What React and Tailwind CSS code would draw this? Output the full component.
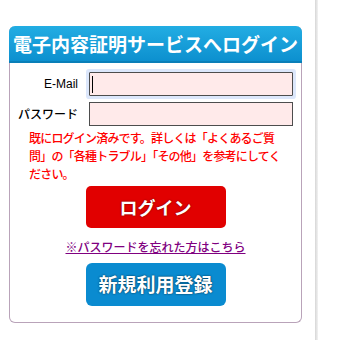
import React from 'react';

const jp = "font-['Noto_Sans_CJK_JP',sans-serif]";

function Field({ label, latin, focused }) {
  return (
    <div className="flex items-center">
      <div
        className={`w-[69px] pr-[1px] text-right text-[12px] text-black ${
          latin ? "font-['Liberation_Sans',sans-serif]" : `${jp} font-medium`
        }`}
      >
        {label}
      </div>
      <div
        className={`ml-[10px] flex h-[24px] w-[204px] items-center border border-[#4d4d4d] bg-[#ffeaea] ${
          focused ? 'rounded-[1px] ring-[3px] ring-[#dce7fb]' : ''
        }`}
      >
        {focused ? <span className="ml-[2px] h-[17px] w-px bg-black" /> : null}
      </div>
    </div>
  );
}

export default function App() {
  return (
    <div className={`flex h-[340px] bg-white ${jp}`}>
      <div className="w-[315px] pl-[9px] pt-[26px]">
        <div className="flex h-[297px] w-[293px] flex-col items-stretch rounded-[6px] border border-t-0 border-[#b9a3b9]">
          <div className="-mx-px flex h-[37px] items-center justify-center rounded-t-[6px] border-b-2 border-[#0a7fb8] bg-gradient-to-b from-[#22ade3] to-[#0c90cf] text-[19px] font-bold leading-none text-white">
            電子内容証明サービスへログイン
          </div>

          <div className="flex flex-col gap-[6px] pt-[9px]">
            <Field label="E-Mail" latin focused />
            <Field label="パスワード" />
          </div>

          <p className="mt-[3px] w-[272px] pl-[19px] text-[12px] font-medium leading-[18px] tracking-[-0.8px] text-[#ff0000]">
            既にログイン済みです。詳しくは「よくあるご質問」の「各種トラブル」「その他」を参考にしてください。
          </p>

          <button className="mx-auto mt-[3px] flex h-[42px] w-[140px] items-center justify-center rounded-[5px] bg-[#e10000] text-[18px] font-bold text-white [text-shadow:0_0_2px_#600]">
            ログイン
          </button>

          <a
            href="#"
            className="mx-auto mt-[10px] text-[12px] font-medium leading-[18px] text-[#800080] underline"
          >
            ※パスワードを忘れた方はこちら
          </a>

          <button className="mx-auto mt-[7px] flex h-[43px] w-[140px] items-center justify-center rounded-[6px] bg-[#0a8bd0] text-[19px] font-bold text-white [text-shadow:0_0_2px_#023]">
            新規利用登録
          </button>
        </div>
      </div>
      <div className="h-[340px] w-[3px] bg-gradient-to-r from-[#d6d6d6] to-[#f2f2f2]" />
      <div className="flex-1 bg-white" />
    </div>
  );
}
